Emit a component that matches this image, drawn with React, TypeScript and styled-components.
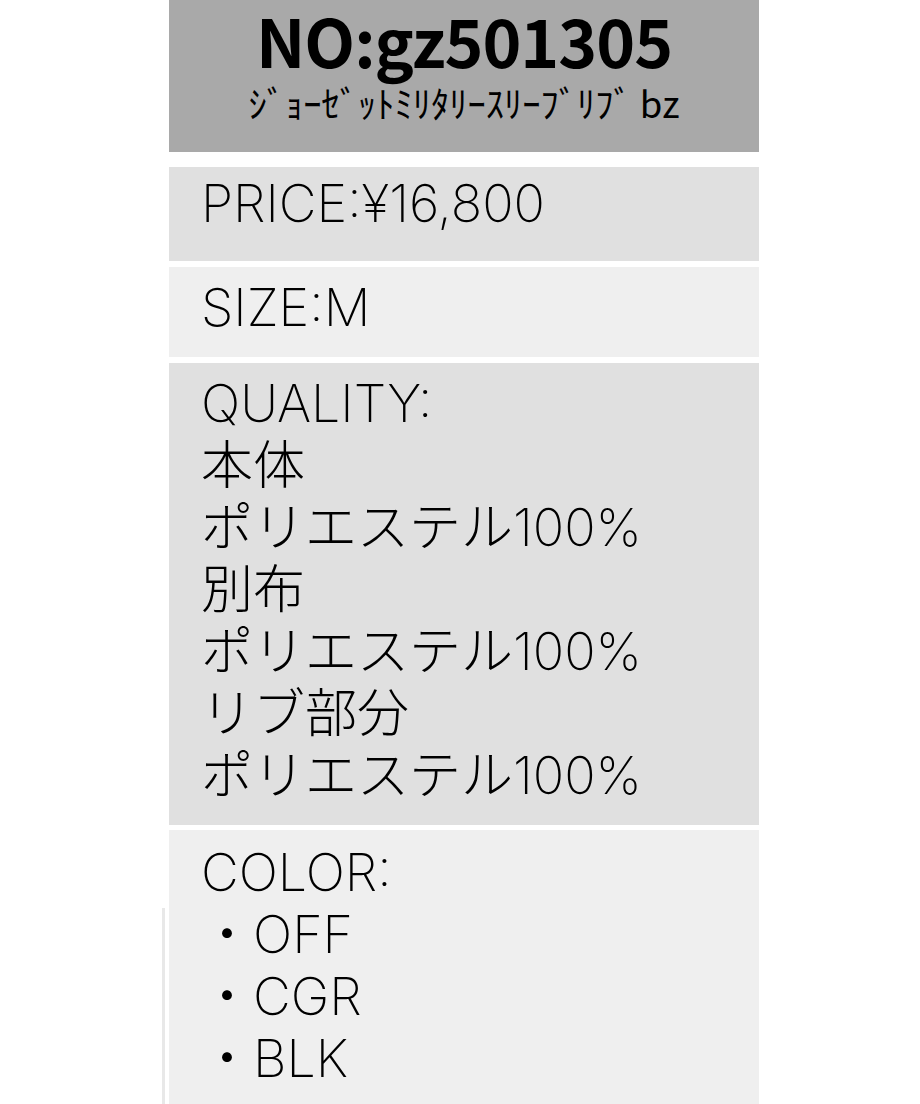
import React from "react";
import styled, { createGlobalStyle } from "styled-components";

const GlobalStyle = createGlobalStyle`
  html, body {
    margin: 0;
    padding: 0;
    background: #ffffff;
  }
  body {
    font-family: "Noto Sans CJK JP", "Noto Sans", sans-serif;
    color: #000;
  }
`;

const Column = styled.div`
  width: 590px;
  margin-left: 169px;
  display: flex;
  flex-direction: column;
`;

const Header = styled.header`
  background: #a9a9a9;
  height: 152px;
  display: flex;
  flex-direction: column;
  align-items: center;
  box-sizing: border-box;
  overflow: hidden;
`;

const Title = styled.h1`
  margin: 0;
  font-size: 66px;
  font-weight: 700;
  line-height: 78px;
  letter-spacing: -1px;
`;

const Subtitle = styled.div`
  margin-top: 5px;
  font-size: 36.5px;
  font-weight: 400;
  line-height: 40px;
  white-space: nowrap;
`;

const Box = styled.section<{ $tone: "mid" | "light"; $top: number; $height?: number; $gap: number }>`
  position: relative;
  box-sizing: border-box;
  margin-top: ${(p) => p.$gap}px;
  background: ${(p) => (p.$tone === "mid" ? "#e0e0e0" : "#efefef")};
  padding: ${(p) => p.$top}px 0 0 32px;
  ${(p) => (p.$height ? `height: ${p.$height}px;` : "padding-bottom: 30px;")}
  font-family: "Inter", "Noto Sans CJK JP", sans-serif;
  font-size: 52px;
  font-weight: 250;
  line-height: 62px;
`;

const Line = styled.div`
  white-space: nowrap;
`;

const ColorBox = styled(Box)`
  &::before {
    content: "";
    position: absolute;
    left: -7px;
    top: 78px;
    bottom: 0;
    width: 3px;
    background: #e8e8e8;
  }
`;

export default function App() {
  return (
    <>
      <GlobalStyle />
      <Column>
        <Header>
          <Title>NO:gz501305</Title>
          <Subtitle>ｼﾞｮｰｾﾞｯﾄﾐﾘﾀﾘｰｽﾘｰﾌﾞﾘﾌﾞ bz</Subtitle>
        </Header>
        <Box $tone="mid" $top={6} $height={94} $gap={15}>
          <Line>PRICE:¥16,800</Line>
        </Box>
        <Box $tone="light" $top={10} $height={90} $gap={6}>
          <Line>SIZE:M</Line>
        </Box>
        <Box $tone="mid" $top={10} $height={462} $gap={6}>
          <Line>QUALITY:</Line>
          <Line>本体</Line>
          <Line>ポリエステル100%</Line>
          <Line>別布</Line>
          <Line>ポリエステル100%</Line>
          <Line>リブ部分</Line>
          <Line>ポリエステル100%</Line>
        </Box>
        <ColorBox $tone="light" $top={12} $gap={5}>
          <Line>COLOR:</Line>
          <Line>・OFF</Line>
          <Line>・CGR</Line>
          <Line>・BLK</Line>
        </ColorBox>
      </Column>
    </>
  );
}
